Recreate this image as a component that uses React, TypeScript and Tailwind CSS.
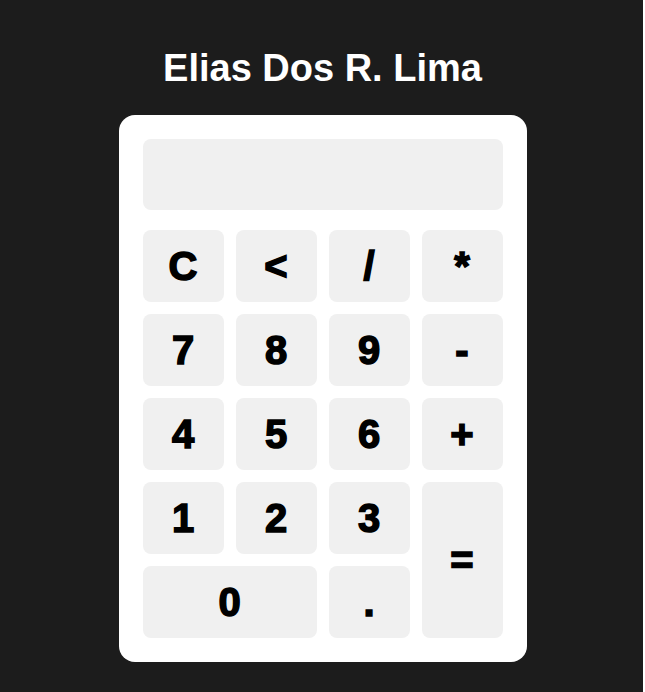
const keys: { label: string; span?: string }[] = [
  { label: "C" },
  { label: "<" },
  { label: "/" },
  { label: "*" },
  { label: "7" },
  { label: "8" },
  { label: "9" },
  { label: "-" },
  { label: "4" },
  { label: "5" },
  { label: "6" },
  { label: "+" },
  { label: "1" },
  { label: "2" },
  { label: "3" },
  { label: "=", span: "row-span-2" },
  { label: "0", span: "col-span-2" },
  { label: "." },
];

export default function App() {
  return (
    <div
      className="min-h-[692px] w-full pt-[49px] bg-[linear-gradient(to_right,#1c1c1c_643px,#ffffff_643px)]"
      style={{ fontFamily: '"Liberation Sans", Arial, sans-serif' }}
    >
      <h1 className="text-center text-[38px] leading-none font-bold text-white mb-[28px]">
        Elias Dos R. Lima
      </h1>
      <div className="mx-auto w-[408px] bg-white rounded-2xl p-6">
        <div className="h-[71px] mb-5 rounded-lg bg-[#f0f0f0]" />
        <div className="grid grid-cols-4 auto-rows-[72px] gap-3">
          {keys.map((k) => (
            <button
              key={k.label}
              className={`${k.span ?? ""} flex items-center justify-center rounded-lg bg-[#f0f0f0] text-[40px] leading-none font-bold text-black [-webkit-text-stroke:1.5px_black]`}
            >
              {k.label}
            </button>
          ))}
        </div>
      </div>
    </div>
  );
}
